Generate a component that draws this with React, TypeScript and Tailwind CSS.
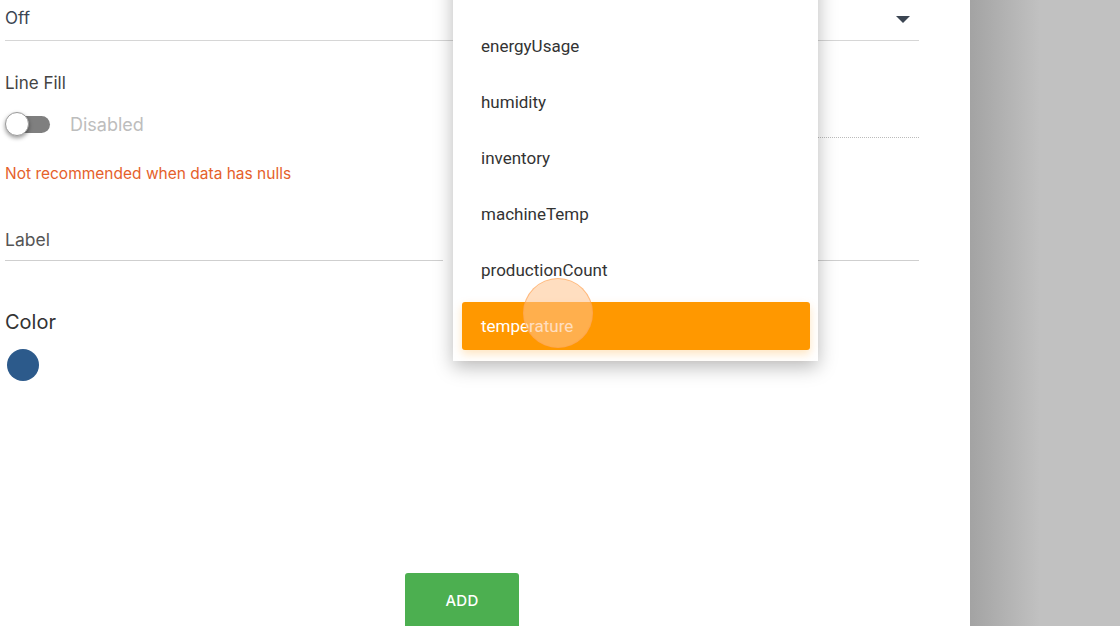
import React from "react";

const items = ["energyUsage", "humidity", "inventory", "machineTemp", "productionCount", "temperature"];

export default function App() {
  return (
    <div className="w-[1120px] h-[626px] flex overflow-hidden font-['Inter',sans-serif]">
      <div className="relative w-[970px] h-full bg-white overflow-hidden">
        <div className="ml-[5px] w-[914px] flex flex-col">
          <div className="h-[41px] border-b border-[#d6d6d6] flex items-center justify-between pb-[2px]">
            <span className="text-[17px] text-[#3b4552]">Off</span>
            <svg width="14" height="8" viewBox="0 0 14 8" className="mr-[9px] mt-[2px]">
              <path d="M0 0 L14 0 L7 7 Z" fill="#3b4552" />
            </svg>
          </div>
          <div className="grid grid-cols-[438px_1fr] gap-[10px] mt-[30px]">
            <div className="flex flex-col">
              <div className="text-[17px] leading-[24px] text-[#444]">Line Fill</div>
              <div className="flex items-center mt-[17px] h-[24px]">
                <div className="relative w-[45px] h-[24px]">
                  <div className="absolute left-[3px] top-[4px] w-[42px] h-[17px] rounded-full bg-[#7f7f7f]" />
                  <div className="absolute left-0 top-0 w-[24px] h-[24px] rounded-full bg-white border border-[#9a9a9a] shadow-[0_2px_4px_rgba(0,0,0,0.4)]" />
                </div>
                <span className="ml-[20px] text-[18px] text-[#bdbdbd]">Disabled</span>
              </div>
            </div>
            <div className="h-[67px] border-b border-dotted border-[#bbbbbb]" />
          </div>
          <div className="mt-[26px] text-[15.5px] leading-[20px] text-[#e5612b]">Not recommended when data has nulls</div>
          <div className="grid grid-cols-[438px_1fr] gap-[10px] mt-[36px]">
            <div className="h-[41px] border-b border-[#cfcfcf] flex items-end pb-[8px]">
              <span className="text-[17.5px] leading-[24px] text-[#555]">Label</span>
            </div>
            <div className="h-[41px] border-b border-[#cfcfcf]" />
          </div>
          <div className="mt-[47px] text-[20px] leading-[28px] text-[#333]">Color</div>
          <div className="mt-[13px] ml-[2px] w-[32px] h-[32px] rounded-full bg-[#2c5a8b]" />
          <button className="mt-[192px] mx-auto w-[114px] h-[56px] rounded-[3px] bg-[#4caf50] text-white text-[15px] font-medium tracking-[0.3px] pb-[0px]">
            ADD
          </button>
        </div>

        <div className="absolute left-[453px] top-[-30px] w-[365px] bg-white pt-[52px] pb-[11px] shadow-[0_6px_18px_rgba(0,0,0,0.28)] font-['Roboto',sans-serif]">
          <div className="flex flex-col gap-[8px]">
            {items.map((it) => {
              const active = it === "temperature";
              return (
                <div
                  key={it}
                  className={
                    active
                      ? "relative mx-[9px] mr-[8px] h-[48px] rounded-[3px] bg-[#ff9800] text-white flex items-center px-[19px] text-[17px] pt-[1px] shadow-[0_4px_10px_rgba(255,152,0,0.25)]"
                      : "relative mx-[9px] mr-[8px] h-[48px] flex items-center px-[19px] text-[17px] pt-[1px] text-[#333]"
                  }
                >
                  {it}
                  {active && (
                    <div className="absolute left-[61px] top-[-24px] w-[70px] h-[70px] rounded-full bg-[rgba(255,195,140,0.55)] border border-[rgba(255,160,80,0.6)]" />
                  )}
                </div>
              );
            })}
          </div>
        </div>
      </div>
      <div className="flex-1 h-full bg-[linear-gradient(to_right,#a3a3a3,#c1c1c1_70px)]" />
    </div>
  );
}
